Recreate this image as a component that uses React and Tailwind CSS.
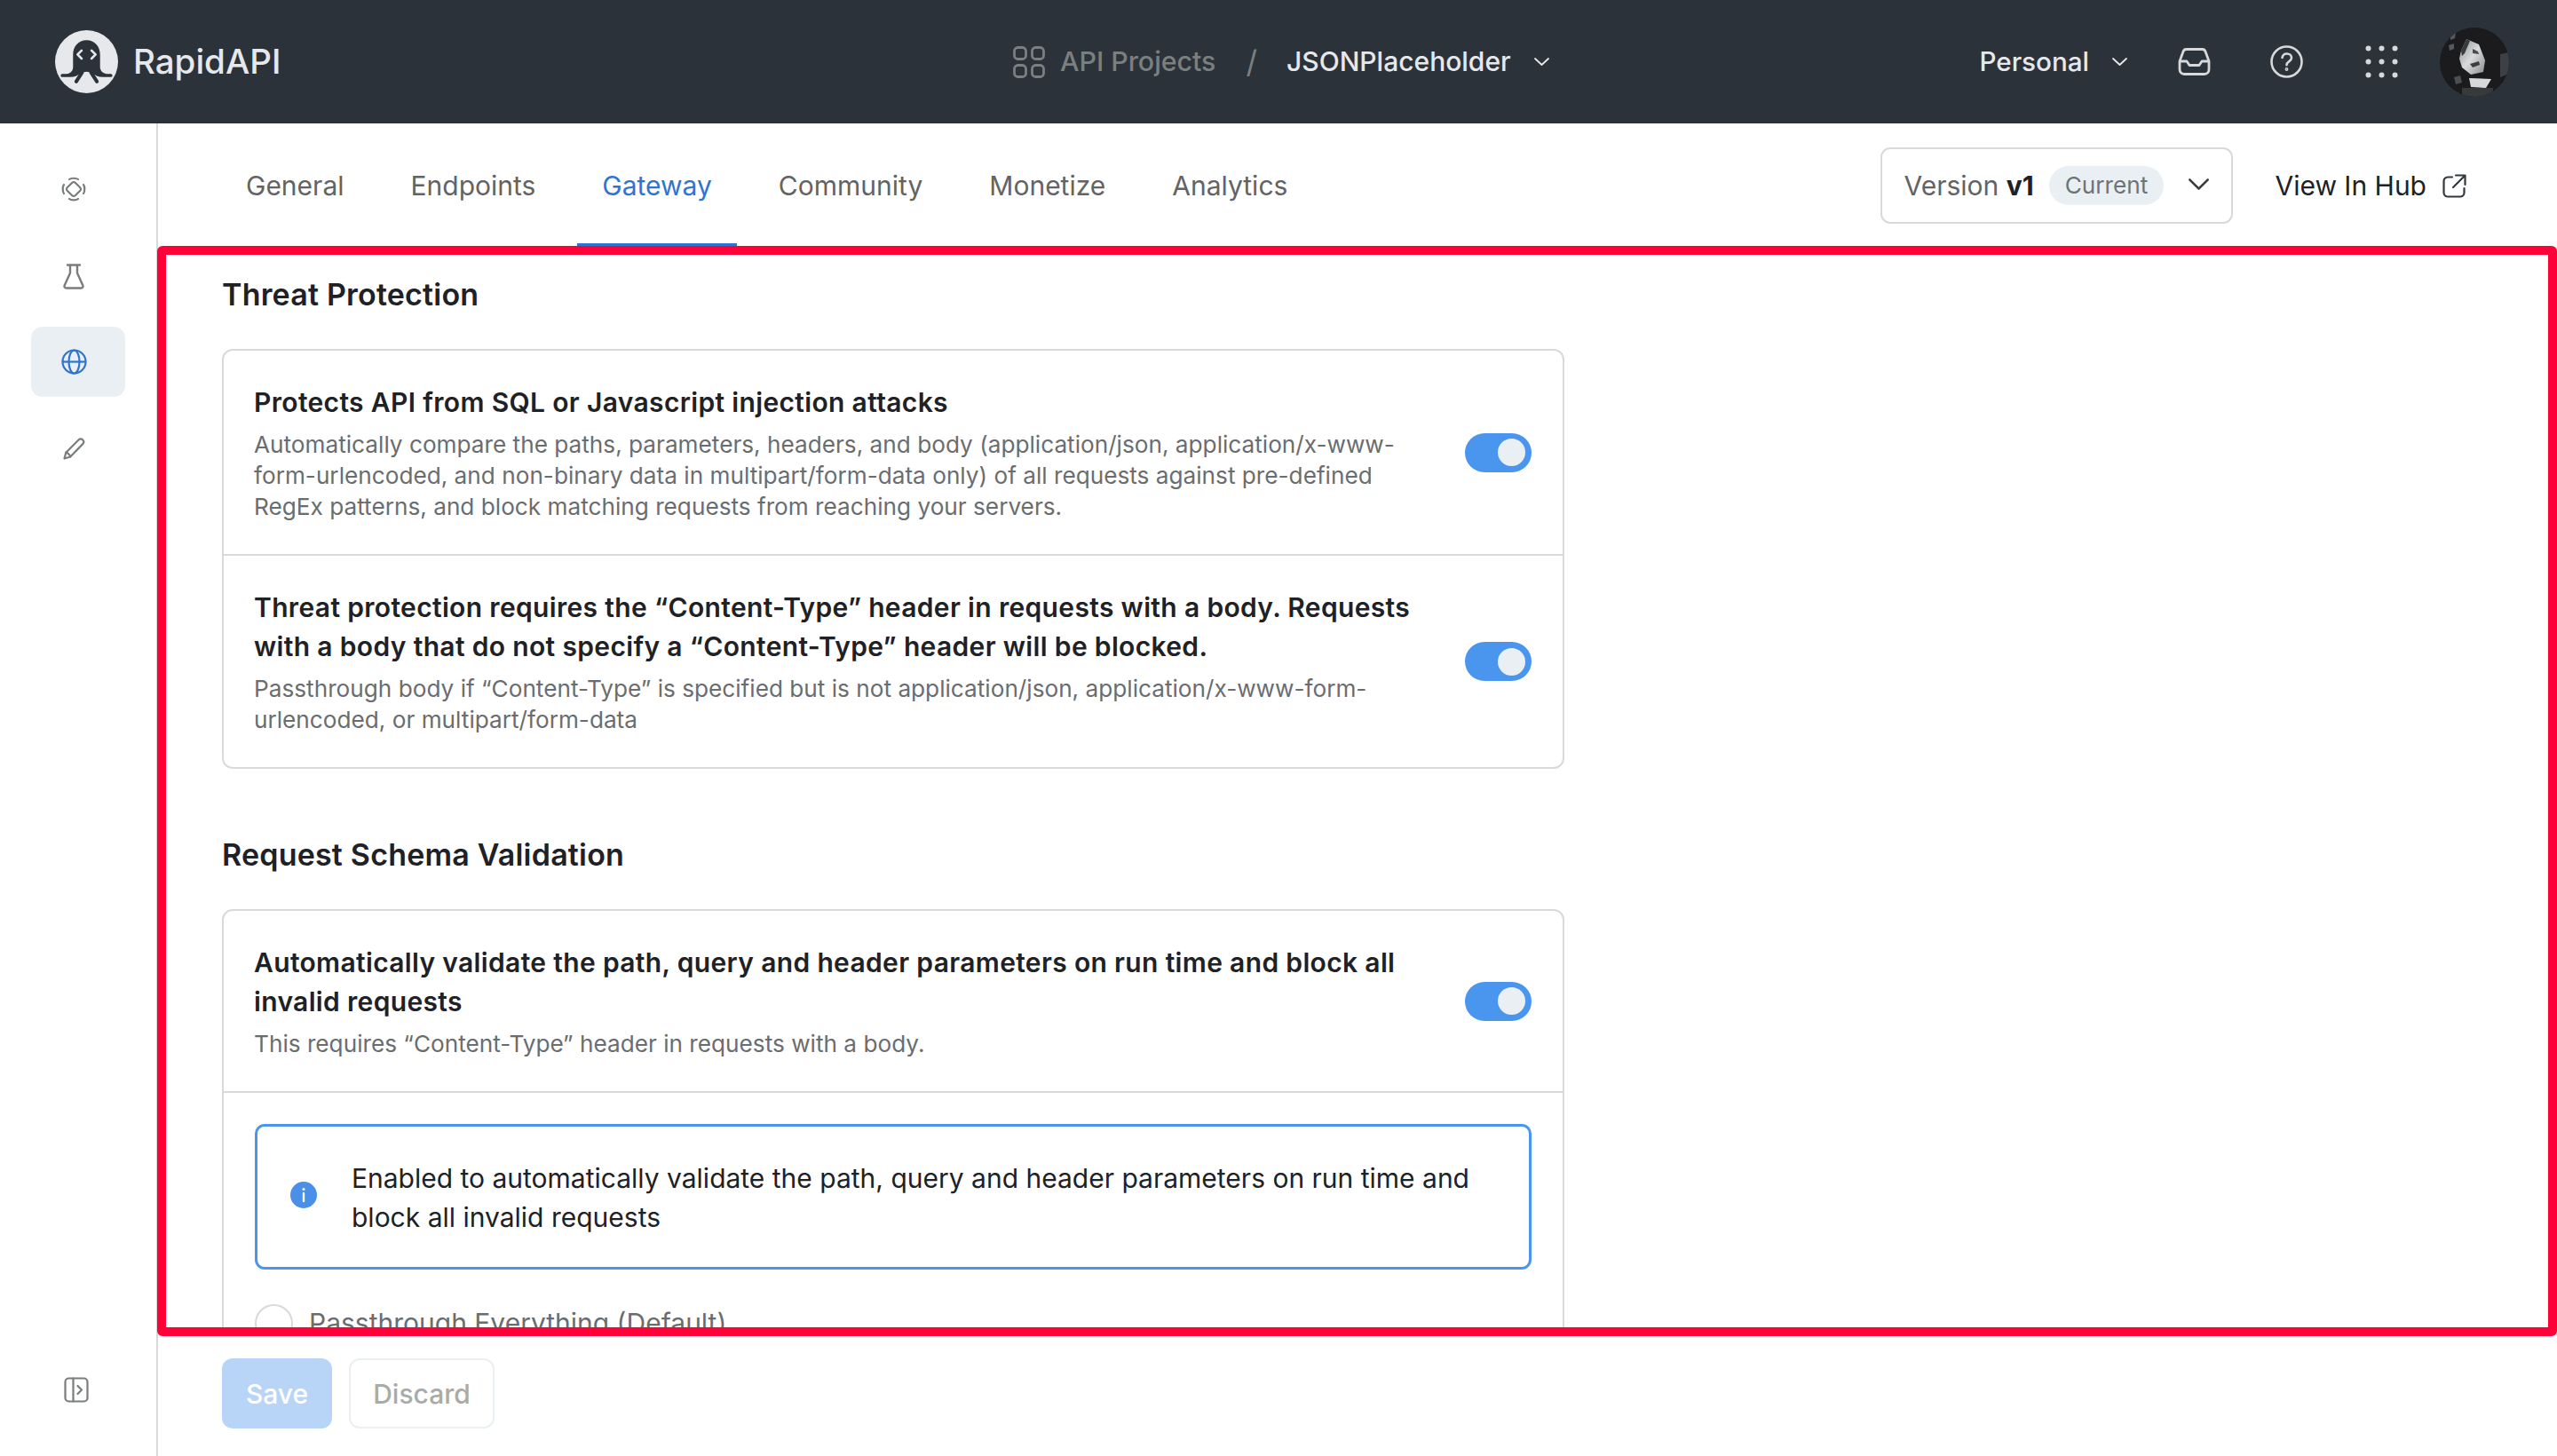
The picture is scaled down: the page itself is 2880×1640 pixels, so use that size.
import React from "react";

const Chevron = ({ className = "", w = 17, h = 9 }) => (
  <svg width={w} height={h} viewBox="0 0 17 9" fill="none" className={className} preserveAspectRatio="none">
    <path d="M1 1l7.5 7L16 1" stroke="currentColor" strokeWidth="1.8" strokeLinecap="round" strokeLinejoin="round" />
  </svg>
);

const Logo = () => (
  <svg width="71" height="71" viewBox="0 0 70 70">
    <circle cx="35" cy="35" r="35" fill="#e6e8eb" />
    <path d="M20 27c0-9 6-16 15-16s15 7 15 16v14c0 4 3 7 7 7.500h5c2 0 2.500 3.500 0 3.500h-9c-5 0-9-2-12-5l-6-1-6 1c-3 3-7 5-12 5h-9c-2.500 0-2-3.500 0-3.500h5c4 0 7-3.500 7-7.500z" fill="#2c323a" />
    <path d="M30 47l-6.500 10M40 47l6.500 10" stroke="#2c323a" strokeWidth="4" strokeLinecap="round" />
    <path d="M29.500 22.500L25 27l4.500 4.500M40.500 22.500L45 27l-4.500 4.500" stroke="#e6e8eb" strokeWidth="2.600" fill="none" strokeLinecap="round" strokeLinejoin="round" />
  </svg>
);

const Avatar = () => (
  <svg width="78" height="78" viewBox="0 0 78 78">
    <defs>
      <clipPath id="av"><circle cx="39" cy="39" r="39" /></clipPath>
      <linearGradient id="face" x1="0" y1="0" x2="1" y2="1">
        <stop offset="0" stopColor="#8b8e90" />
        <stop offset=".5" stopColor="#d8dadc" />
        <stop offset="1" stopColor="#8a8d8f" />
      </linearGradient>
    </defs>
    <g clipPath="url(#av)">
      <rect width="78" height="78" fill="#1b1b1d" />
      <path d="M68 30l10-2v24l-10 4z" fill="#3d4145" />
      <path d="M12 8l6-3-1 7-5 2zM10 20l6-2 0 6-5 2z" fill="#55595d" />
      <path d="M16 56l7-2 2 8-7 2z" fill="#4b4f53" />
      <path d="M24 26L30 13l14 6 7 18-2 13-14 3-10-8-3-10z" fill="url(#face)" />
      <path d="M24 26l6-13 4 2-3 7-3 7-3 3z" fill="#3a3b3d" />
      <path d="M34 41l10-3 1 4-8 3z" fill="#3c3d3f" />
      <path d="M37 24l6 3 1 3-7-1z" fill="#4a4b4d" />
      <path d="M33 57l25 1-6 10-17-1z" fill="#d6d8da" />
      <path d="M25 68h35v10H25z" fill="#38393b" />
    </g>
  </svg>
);

const Toggle = () => (
  <div className="w-[75px] h-[44px] rounded-full bg-[#4a96ee] flex items-center justify-end pr-[7px] shrink-0">
    <div className="w-[31px] h-[31px] rounded-full bg-[#e9eff3]" />
  </div>
);

const Row = ({ title, desc, last }) => (
  <div className={`flex items-center justify-between pl-[34px] pr-[35px] pt-[36px] pb-[36px] ${last ? "" : "border-b-2 border-[#d9d9d9]"}`}>
    <div className="w-[1320px]">
      <div className="text-[30px] leading-[44px] font-semibold tracking-[0.34px] text-[#1e2125]">{title}</div>
      <div className="mt-[8px] text-[26.2px] leading-[35px] text-[#6a6d70]">{desc}</div>
    </div>
    <Toggle />
  </div>
);

const Tab = ({ children, active }) => (
  <div className={`h-full flex items-center px-[28px] pt-[6px] border-b-[3px] ${active ? "text-[#2f74d0] border-[#2f74d0]" : "text-[#636363] border-transparent"}`}>
    {children}
  </div>
);

const sideIcon = "text-[#7a7d7d]";

export default function App() {
  return (
    <div className="relative w-[2880px] h-[1640px] overflow-hidden bg-white font-['Inter',sans-serif] flex flex-col">
      {/* Header */}
      <header className="h-[139px] shrink-0 bg-[#2c323a] flex items-center pl-[62px] pr-[54px]">
        <div className="flex items-center w-[1079px] shrink-0">
          <Logo />
          <span className="ml-[17px] text-[38.5px] font-medium text-[#e6e8eb]">RapidAPI</span>
        </div>
        <div className="flex items-center">
          <svg width="36" height="36" viewBox="0 0 36 36" fill="none" stroke="#7a8080" strokeWidth="2.800">
            <rect x="1.500" y="1.500" width="13" height="13" rx="4" />
            <rect x="21.500" y="1.500" width="13" height="13" rx="4" />
            <rect x="1.500" y="21.500" width="13" height="13" rx="4" />
            <rect x="21.500" y="21.500" width="13" height="13" rx="4" />
          </svg>
          <span className="ml-[17px] text-[30.3px] font-medium text-[#7a8080]">API Projects</span>
          <span className="ml-[34px] text-[35px] leading-none text-[#7a8080]">/</span>
          <span className="ml-[33px] text-[30px] font-medium text-[#e6e8eb]">JSONPlaceholder</span>
          <Chevron className="ml-[26px] text-[#e6e8eb]" />
        </div>
        <div className="ml-auto flex items-center">
          <span className="text-[29.6px] font-medium text-[#e6e8eb]">Personal</span>
          <Chevron className="ml-[26px] mr-[57px] text-[#e6e8eb]" />
          <svg width="37" height="31" viewBox="0 0 37 31" fill="none" stroke="#d6d8da" strokeWidth="2.800" strokeLinejoin="round">
            <path d="M2 15L6 4c.6-1.600 2-2.500 3.500-2.500h18c1.500 0 2.900.9 3.500 2.500l4 11v9c0 3-2 5.500-5 5.500H7c-3 0-5-2.500-5-5.500z" />
            <path d="M2 15h8l3 4.500h11l3-4.500h8" />
          </svg>
          <svg className="ml-[67px]" width="37" height="37" viewBox="0 0 37 37" fill="none" stroke="#d6d8da" strokeWidth="2.600" strokeLinecap="round">
            <circle cx="18.500" cy="18.500" r="17" />
            <path d="M13.500 14c.5-3 2.800-4.500 5.200-4.500 3 0 5.300 2 5.300 4.700 0 3.800-5.500 4-5.500 8" />
            <circle cx="18.500" cy="27" r=".6" fill="#d6d8da" />
          </svg>
          <svg className="ml-[70px]" width="37" height="37" viewBox="0 0 37 37" fill="#d6d8da">
            {[3.5, 18.5, 33.5].map((y) =>
              [3.5, 18.5, 33.5].map((x) => <circle key={`${x}-${y}`} cx={x} cy={y} r="3" />)
            )}
          </svg>
          <div className="ml-[47px]"><Avatar /></div>
        </div>
      </header>

      <div className="flex flex-1 min-h-0">
        {/* Sidebar */}
        <aside className="w-[178px] shrink-0 border-r-2 border-[#d9d9d9] relative flex flex-col">
          <div className="pl-[35px] pt-[21px] flex flex-col">
            <div className={`w-[106px] h-[106px] flex items-center pl-[34px] ${sideIcon}`}>
              <svg width="28" height="28" viewBox="0 0 28 28" fill="none" stroke="currentColor" strokeWidth="2.200" strokeLinecap="round" strokeLinejoin="round">
                <path d="M12.300 6.700a2.400 2.400 0 0 1 3.400 0l5.600 5.600a2.400 2.400 0 0 1 0 3.400l-5.600 5.600a2.400 2.400 0 0 1-3.400 0l-5.600-5.600a2.400 2.400 0 0 1 0-3.400z" />
                <path d="M9 3C11 1.300 17 1.300 19 3M25 9c1.700 2 1.700 8 0 10M19 25c-2 1.700-8 1.700-10 0M3 19c-1.700-2-1.700-8 0-10" />
              </svg>
            </div>
            <div className={`w-[106px] h-[102px] flex items-center pl-[36px] pb-[11px] ${sideIcon}`}>
              <svg width="24" height="29" viewBox="0 0 24 29" fill="none" stroke="currentColor" strokeWidth="2.400" strokeLinecap="round" strokeLinejoin="round">
                <path d="M5 1.500h14M8 1.500v9L1.700 24.500c-.7 1.800.3 3 2 3h16.600c1.700 0 2.700-1.200 2-3L16 10.500v-9" />
              </svg>
            </div>
            <div className="w-[106px] h-[79px] rounded-[13px] bg-[#e9eff3] flex items-center pl-[34px] text-[#2f74d0]">
              <svg width="29" height="29" viewBox="0 0 29 29" fill="none" stroke="currentColor" strokeWidth="2.200">
                <circle cx="14.500" cy="14.500" r="13" />
                <ellipse cx="14.500" cy="14.500" rx="6" ry="13" />
                <path d="M1.500 14.500h26" />
              </svg>
            </div>
            <div className={`w-[106px] h-[116px] flex items-center pl-[36px] ${sideIcon}`}>
              <svg width="25" height="25" viewBox="0 0 25 25" fill="none" stroke="currentColor" strokeWidth="2.200" strokeLinecap="round" strokeLinejoin="round">
                <path d="M1.500 23.500l1.800-6.800L17.500 2.500c1.400-1.400 3.500-1.400 4.700 0 1.300 1.300 1.300 3.300 0 4.600L8.200 21.500z" />
                <path d="M3.300 16.700c2 .2 4.700 2.800 4.900 4.800" />
              </svg>
            </div>
          </div>
          <div className={`mt-auto pb-[60px] pl-[72px] ${sideIcon}`}>
            <svg width="28" height="29" viewBox="0 0 28 29" fill="none" stroke="currentColor" strokeWidth="2.200" strokeLinecap="round" strokeLinejoin="round">
              <rect x="1.500" y="1.500" width="25" height="26" rx="4" />
              <path d="M10.500 1.500v26M15.500 10l4.500 4.500-4.500 4.500" />
            </svg>
          </div>
        </aside>

        {/* Main */}
        <main className="flex-1 min-w-0 flex flex-col">
          <div className="h-[138px] shrink-0 flex items-center pl-[71px] pr-[102px] text-[30px]">
            <nav className="flex h-full gap-[19px]">
              <Tab>General</Tab>
              <Tab>Endpoints</Tab>
              <Tab active>Gateway</Tab>
              <Tab>Community</Tab>
              <Tab>Monetize</Tab>
              <Tab>Analytics</Tab>
            </nav>
            <div className="ml-auto flex items-center mt-[2px]">
              <div className="w-[397px] h-[86px] rounded-[11px] border-2 border-[#d9d9d9] flex items-center pl-[24px]">
                <span className="text-[#636363]">Version <span className="font-bold text-[#1e2125]">v1</span></span>
                <span className="ml-[17px] h-[44px] px-[18px] flex items-center rounded-full bg-[#e9eff3] text-[26.2px] text-[#6f7375]">Current</span>
                <Chevron w={23} h={13} className="ml-[28px] text-[#3a3d40] -mt-[4px]" />
              </div>
              <span className="ml-[47px] text-[#1e2125]">View In Hub</span>
              <svg className="ml-[18px]" width="27" height="27" viewBox="0 0 27 27" fill="none" stroke="#33383d" strokeWidth="2.200" strokeLinecap="round" strokeLinejoin="round">
                <path d="M11 3.500H6a4.500 4.500 0 0 0-4.500 4.500v13A4.500 4.500 0 0 0 6 25.500h14a4.500 4.500 0 0 0 4.500-4.500v-5" />
                <path d="M15 1.500h10.500V12M25 2L12 15" />
              </svg>
            </div>
          </div>

          <div className="flex-1 min-h-0 overflow-hidden pl-[72px] pt-[33px]">
            <div className="w-[1512px]">
              <h2 className="text-[34px] leading-[44px] font-semibold tracking-[0.2px] text-[#1e2125]">Threat Protection</h2>
              <div className="mt-[39px] rounded-[12px] border-2 border-[#d9d9d9]">
                <Row
                  title="Protects API from SQL or Javascript injection attacks"
                  desc="Automatically compare the paths, parameters, headers, and body (application/json, application/x-www-form-urlencoded, and non-binary data in multipart/form-data only) of all requests against pre-defined RegEx patterns, and block matching requests from reaching your servers."
                />
                <Row
                  last
                  title="Threat protection requires the “Content-Type” header in requests with a body. Requests with a body that do not specify a “Content-Type” header will be blocked."
                  desc="Passthrough body if “Content-Type” is specified but is not application/json, application/x-www-form-urlencoded, or multipart/form-data"
                />
              </div>
              <h2 className="mt-[75px] text-[34px] leading-[44px] font-semibold tracking-[0.2px] text-[#1e2125]">Request Schema Validation</h2>
              <div className="mt-[39px] rounded-[12px] border-2 border-[#d9d9d9]">
                <Row
                  title="Automatically validate the path, query and header parameters on run time and block all invalid requests"
                  desc="This requires “Content-Type” header in requests with a body."
                />
                <div className="px-[35px] pt-[35px] pb-[40px]">
                  <div className="h-[164px] rounded-[11px] border-[3px] border-[#4a96ee] flex items-center pl-[37px] pr-[40px]">
                    <svg width="30" height="30" viewBox="0 0 30 30" className="shrink-0 -mt-[5px]">
                      <circle cx="15" cy="15" r="15" fill="#4a8fe8" />
                      <path d="M15 13v9" stroke="#fff" strokeWidth="2.400" strokeLinecap="round" />
                      <circle cx="15" cy="8.500" r="1.500" fill="#fff" />
                    </svg>
                    <div className="ml-[39px] pt-[2px] text-[30px] leading-[44px] text-[#1e2125]">
                      Enabled to automatically validate the path, query and header parameters on run time and block all invalid requests
                    </div>
                  </div>
                  <div className="mt-[38px] flex items-center">
                    <div className="w-[43px] h-[43px] rounded-full border-2 border-[#d9d9d9] shrink-0" />
                    <span className="ml-[18px] text-[30px] text-[#6a6d70]">Passthrough Everything (Default)</span>
                  </div>
                </div>
              </div>
            </div>
          </div>

          <div className="h-[135px] shrink-0 pl-[72px] pt-[25px] flex items-start gap-[19px] text-[30px] font-medium">
            <div className="w-[124px] h-[79px] pt-[2px] rounded-[12px] bg-[#b8d4f7] text-white flex items-center justify-center">Save</div>
            <div className="w-[164px] h-[79px] pt-[2px] rounded-[12px] border-2 border-[#e9eff3] text-[#a9abab] flex items-center justify-center">Discard</div>
          </div>
        </main>
      </div>

      {/* Highlight frame over the page */}
      <div className="absolute left-[177px] right-0 top-[277px] h-[1228px] border-[10px] border-[#ff0038] rounded-[6px] pointer-events-none" />
    </div>
  );
}
